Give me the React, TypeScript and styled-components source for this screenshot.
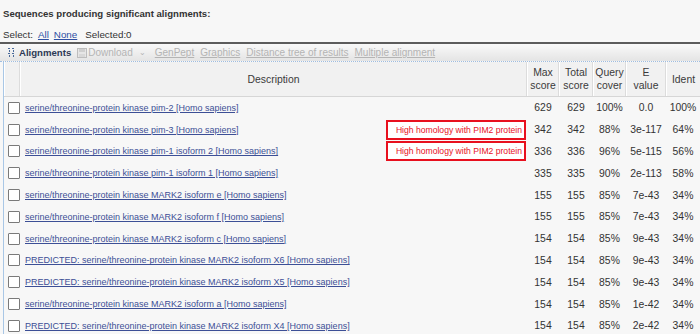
import React from 'react'
import styled, { createGlobalStyle } from 'styled-components';

const GlobalStyle = createGlobalStyle`
  body {
    margin: 0;
    background: #f7f7f7;
    font-family: "Liberation Sans", Arial, sans-serif;
    color: #333;
  }
`;

const Page = styled.div`
  width: 700px;
  height: 334px;
  overflow: hidden;
  background: #f7f7f7;
`;

const Title = styled.div`
  padding: 8px 0 0 3px;
  height: 19px;
  font-size: 9.6px;
  font-weight: bold;
  color: #333;
`;

const SelectBar = styled.div`
  display: flex;
  align-items: center;
  gap: 5px;
  height: 15px;
  padding-left: 3px;
  font-size: 9.8px;
  color: #333;
`;

const SelectLink = styled.a`
  color: #2e4fa3;
  text-decoration: underline;
`;

const Selected = styled.span`
  margin-left: 3px;
`;

const Toolbar = styled.div`
  display: flex;
  align-items: center;
  gap: 6px;
  height: 17px;
  padding-left: 7px;
  border-top: 2px solid #5c5c5c;
  border-bottom: 1px dotted #9fbde0;
  background: linear-gradient(#f9f9f9, #e4e4e4);
  font-size: 10px;
`;

const ToolMain = styled.span`
  display: flex;
  align-items: center;
  gap: 3px;
  font-weight: bold;
  font-size: 9.6px;
  color: #2d3a55;
`;

const ToolDisabled = styled.span`
  display: flex;
  align-items: center;
  gap: 1px;
  color: #b4b4b4;
`;

const ToolLink = styled.span`
  color: #b4b4b4;
  text-decoration: underline;
`;

const Chevron = styled.span`
  color: #b4b4b4;
  margin: 0 3px 0 0;
  font-size: 8px;
`;

const Table = styled.div`
  margin-left: 3px;
  border-left: 1px solid #a9c7e6;
`;

const cols = '16px 507px 32px 34px 33px 40px 34px';

const HeaderRow = styled.div`
  display: grid;
  grid-template-columns: ${cols};
  height: 34px;
  border-bottom: 1px solid #d6d6d6;
  background: #f1f1f1;
`;

const HeadCell = styled.div`
  display: flex;
  align-items: center;
  justify-content: center;
  text-align: center;
  border-right: 1px solid #dcdcdc;
  border-left: 1px solid #ffffff;
  font-size: 10.4px;
  line-height: 13px;
  color: #3a3a3a;
  &:last-child { border-right: none; }
`;

const Row = styled.div`
  display: grid;
  grid-template-columns: ${cols};
  height: 21.8px;
  align-items: center;
  font-size: 10.4px;
`;

const Check = styled.span`
  width: 10px;
  height: 10px;
  margin-left: 4px;
  border: 1px solid #7a7a7a;
  border-radius: 1px;
  background: #fff;
`;

const DescCell = styled.div`
  display: flex;
  align-items: center;
  justify-content: space-between;
  padding-left: 5px;
  white-space: nowrap;
`;

const DescLink = styled.a`
  color: #3c4f96;
  text-decoration: underline;
  font-size: 9px;
`;

const Note = styled.span`
  display: inline-flex;
  align-items: center;
  height: 16px;
  padding: 0 2px 0 8px;
  margin-right: 1px;
  border: 2px solid #e8101e;
  color: #e8101e;
  font-size: 8.6px;
  background: #fff;
`;

const Num = styled.div`
  text-align: center;
  color: #333;
`;

interface Hit {
  desc: string;
  max: number;
  cover: string;
  e: string;
  ident: string;
  note?: boolean;
}

const hits: Hit[] = [
  { desc: 'serine/threonine-protein kinase pim-2 [Homo sapiens]', max: 629, cover: '100%', e: '0.0', ident: '100%' },
  { desc: 'serine/threonine-protein kinase pim-3 [Homo sapiens]', max: 342, cover: '88%', e: '3e-117', ident: '64%', note: true },
  { desc: 'serine/threonine-protein kinase pim-1 isoform 2 [Homo sapiens]', max: 336, cover: '96%', e: '5e-115', ident: '56%', note: true },
  { desc: 'serine/threonine-protein kinase pim-1 isoform 1 [Homo sapiens]', max: 335, cover: '90%', e: '2e-113', ident: '58%' },
  { desc: 'serine/threonine-protein kinase MARK2 isoform e [Homo sapiens]', max: 155, cover: '85%', e: '7e-43', ident: '34%' },
  { desc: 'serine/threonine-protein kinase MARK2 isoform f [Homo sapiens]', max: 155, cover: '85%', e: '7e-43', ident: '34%' },
  { desc: 'serine/threonine-protein kinase MARK2 isoform c [Homo sapiens]', max: 154, cover: '85%', e: '9e-43', ident: '34%' },
  { desc: 'PREDICTED: serine/threonine-protein kinase MARK2 isoform X6 [Homo sapiens]', max: 154, cover: '85%', e: '9e-43', ident: '34%' },
  { desc: 'PREDICTED: serine/threonine-protein kinase MARK2 isoform X5 [Homo sapiens]', max: 154, cover: '85%', e: '9e-43', ident: '34%' },
  { desc: 'serine/threonine-protein kinase MARK2 isoform a [Homo sapiens]', max: 154, cover: '85%', e: '1e-42', ident: '34%' },
  { desc: 'PREDICTED: serine/threonine-protein kinase MARK2 isoform X4 [Homo sapiens]', max: 154, cover: '85%', e: '2e-42', ident: '34%' },
];

const AlignIcon = () => (
  <svg width="9" height="11" viewBox="0 0 9 11">
    <g fill="#4a6a9a">
      <rect x="1" y="1" width="2" height="1" />
      <rect x="5" y="1" width="2" height="1" />
      <rect x="2" y="3" width="1" height="2" />
      <rect x="6" y="3" width="1" height="2" />
      <rect x="1" y="6" width="2" height="1" />
      <rect x="5" y="6" width="2" height="1" />
      <rect x="2" y="8" width="1" height="2" />
      <rect x="6" y="8" width="1" height="2" />
    </g>
  </svg>
);

const DownloadIcon = () => (
  <svg width="10" height="10" viewBox="0 0 10 10">
    <rect x="0.5" y="0.5" width="9" height="9" fill="#e6e6e6" stroke="#bdbdbd" />
    <rect x="2" y="1" width="6" height="3" fill="#cfcfcf" />
    <rect x="2" y="6" width="6" height="3" fill="#d8d8d8" />
  </svg>
);

const App: React.FC = () => {
  return (
    <Page>
      <GlobalStyle />
      <Title>Sequences producing significant alignments:</Title>
      <SelectBar>
        <span>Select:</span>
        <SelectLink>All</SelectLink>
        <SelectLink>None</SelectLink>
        <Selected>Selected:0</Selected>
      </SelectBar>
      <Toolbar>
        <ToolMain><AlignIcon />Alignments</ToolMain>
        <ToolDisabled><DownloadIcon />Download</ToolDisabled>
        <Chevron>⌄</Chevron>
        <ToolLink>GenPept</ToolLink>
        <ToolLink>Graphics</ToolLink>
        <ToolLink>Distance tree of results</ToolLink>
        <ToolLink>Multiple alignment</ToolLink>
      </Toolbar>
      <Table>
        <HeaderRow>
          <HeadCell />
          <HeadCell>Description</HeadCell>
          <HeadCell>Max<br />score</HeadCell>
          <HeadCell>Total<br />score</HeadCell>
          <HeadCell>Query<br />cover</HeadCell>
          <HeadCell>E<br />value</HeadCell>
          <HeadCell>Ident</HeadCell>
        </HeaderRow>
        {hits.map((h, i) => (
          <Row key={i}>
            <Check />
            <DescCell>
              <DescLink>{h.desc}</DescLink>
              {h.note && <Note>High homology with PIM2 protein</Note>}
            </DescCell>
            <Num>{h.max}</Num>
            <Num>{h.max}</Num>
            <Num>{h.cover}</Num>
            <Num>{h.e}</Num>
            <Num>{h.ident}</Num>
          </Row>
        ))}
      </Table>
    </Page>
  )
}

export default App;
